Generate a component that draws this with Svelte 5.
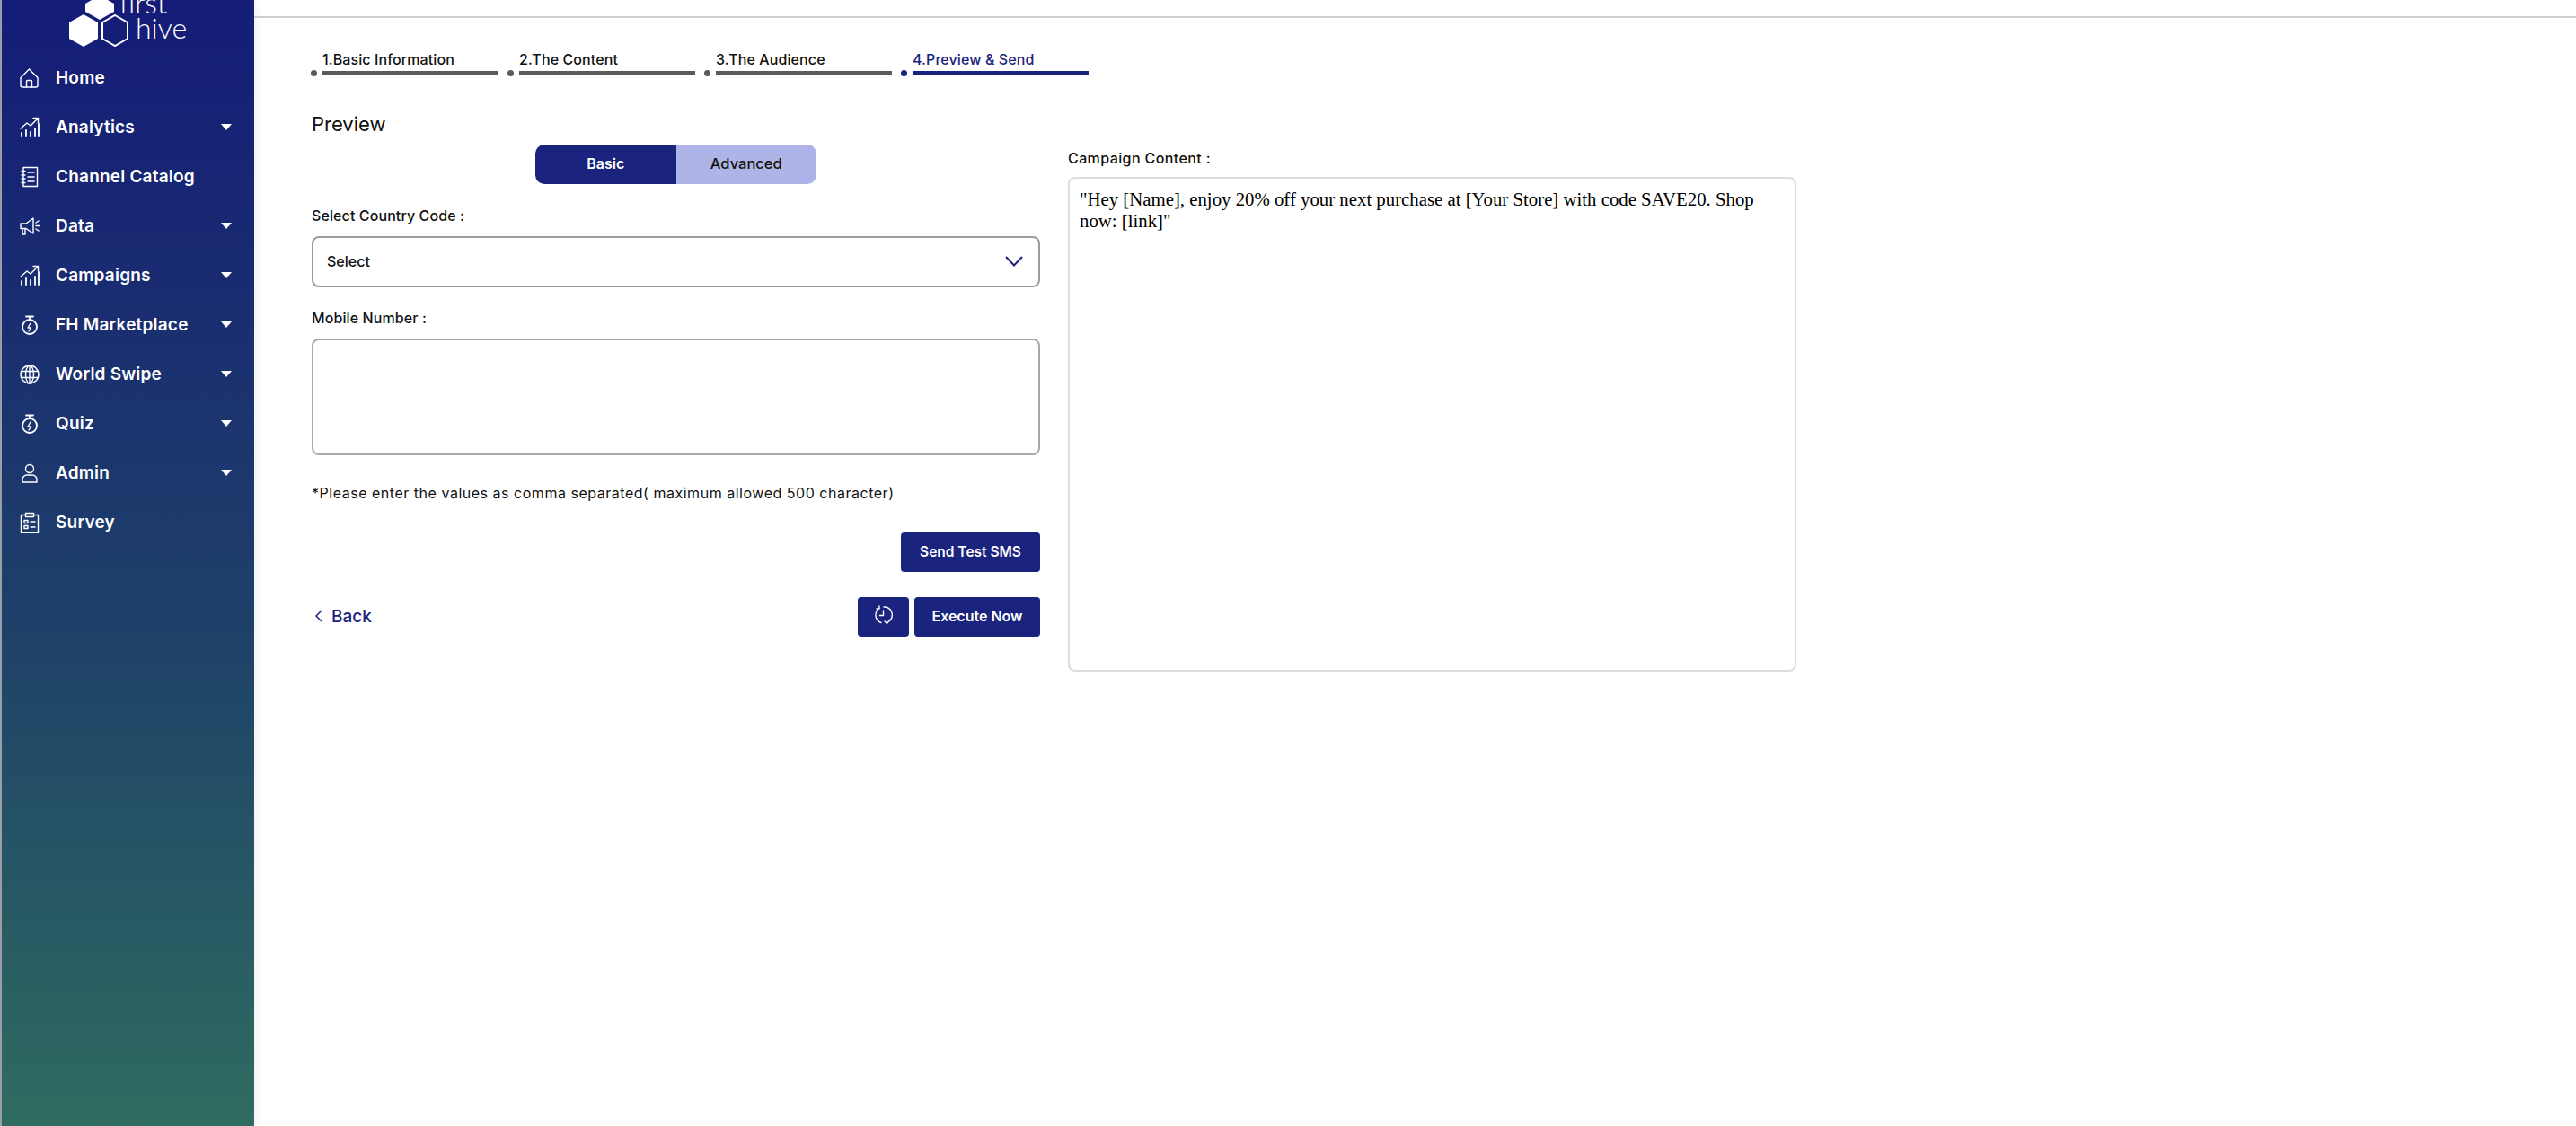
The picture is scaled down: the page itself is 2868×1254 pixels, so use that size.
<script>
  // Left nav entries: icon key, label, whether the row has a dropdown caret
  const nav = [
    { icon: "home", label: "Home" },
    { icon: "chart", label: "Analytics", caret: true },
    { icon: "book", label: "Channel Catalog" },
    { icon: "horn", label: "Data", caret: true },
    { icon: "chart", label: "Campaigns", caret: true },
    { icon: "watch", label: "FH Marketplace", caret: true },
    { icon: "globe", label: "World Swipe", caret: true },
    { icon: "watch", label: "Quiz", caret: true },
    { icon: "user", label: "Admin", caret: true },
    { icon: "clip", label: "Survey" },
  ];
  const steps = ["1.Basic Information", "2.The Content", "3.The Audience", "4.Preview & Send"];
  let mode = $state("Basic");
</script>

<div class="page">
  <aside class="sidebar">
    <svg class="logo" width="283" height="59" viewBox="0 0 283 59">
      <path d="M95 4 111 -5 127 4V13L111 22 95 13Z" fill="#fff" />
      <path d="M93 16 109 25V43L93 52 77 43V25Z" fill="#fff" />
      <path d="M128 17 142 25V43L128 51 114 43V25Z" fill="none" stroke="#fff" stroke-width="2" />
      <text x="133" y="15" class="logo-text">first</text>
      <text x="151" y="43" class="logo-text">hive</text>
    </svg>

    <nav>
      {#each nav as item (item.label)}
        <div class="nav-row">
          <svg class="nav-icon" width="24" height="24" viewBox="0 0 24 24" fill="none" stroke="#fff" stroke-width="1.4" stroke-linecap="round" stroke-linejoin="round">
            {#if item.icon === "home"}
              <path d="M2 11.5 11.5 2 21 11.5V20a2 2 0 0 1-2 2H4a2 2 0 0 1-2-2Z" />
              <path d="M8.5 22v-6.5a1 1 0 0 1 1-1h4a1 1 0 0 1 1 1V22" />
            {:else if item.icon === "chart"}
              <path d="M2 13 9 7l4 3 8-8M16 1.5h5.500V7" />
              <path d="M3 22v-4M8 22v-7M13 22v-5M18 22v-9M22 22V8" stroke-width="1.8" />
            {:else if item.icon === "book"}
              <path d="M5 1.5h15.500v21H5Z" />
              <path d="M3 5.5h4M3 10h4M3 14h4M3 18.5h4M10 7h7M10 12h7M10 17h7" />
            {:else if item.icon === "horn"}
              <path d="M2 9h6L16 3v17L8 14.5H2ZM4 14.5V21h3v-6.5" />
              <path d="M19 8l3-2M19 11.5h4M19 15l3 2" />
            {:else if item.icon === "watch"}
              <circle cx="12" cy="14" r="8" stroke-width="1.8" />
              <path d="M8 2.5h8M12 2.5V6" stroke-width="1.8" />
              <path d="M13 10l-3 5h3.500L11 19" />
            {:else if item.icon === "globe"}
              <circle cx="12" cy="12" r="10" />
              <ellipse cx="12" cy="12" rx="4.5" ry="10" />
              <path d="M2.5 8.5h19M2.5 15.5h19M12 2v20" />
            {:else if item.icon === "user"}
              <circle cx="12" cy="7" r="4.5" />
              <path d="M4 22v-3a5 5 0 0 1 5-5h6a5 5 0 0 1 5 5v3Z" />
            {:else}
              <path d="M7.5 3.5H2.5v20h19v-20h-5" />
              <path d="M7.5 1.5h9v4h-9Z" />
              <path d="M6 9.5h4v3H6ZM6 15.5h4v3H6ZM13 11h5M13 17h5" />
            {/if}
          </svg>
          <span class="nav-label">{item.label}</span>
          {#if item.caret}<span class="caret"></span>{/if}
        </div>
      {/each}
    </nav>
  </aside>

  <main class="main">
    <div class="topline"></div>

    <div class="stepper">
      {#each steps as step, i (step)}
        <div class="step" class:current={i === 3}>
          <span class="dot"></span>
          <div class="step-body">
            <span class="step-label">{step}</span>
            <span class="bar"></span>
          </div>
        </div>
      {/each}
    </div>

    <div class="columns">
      <section class="left">
        <h2>Preview</h2>
        <div class="toggle">
          {#each ["Basic", "Advanced"] as m (m)}
            <button class:on={mode === m} onclick={() => (mode = m)}>{m}</button>
          {/each}
        </div>

        <div class="field-label country">Select Country Code :</div>
        <div class="select">
          <span>Select</span>
          <svg width="20" height="12" viewBox="0 0 20 12" fill="none" stroke="#1a237e" stroke-width="2"><path d="M1 1l9 9.5L19 1" /></svg>
        </div>

        <div class="field-label mobile">Mobile Number :</div>
        <div class="mobile-box"></div>

        <p class="hint">*Please enter the values as comma separated( maximum allowed 500 character)</p>

        <div class="send-row"><button class="btn send">Send Test SMS</button></div>

        <div class="actions">
          <span class="back">
            <svg width="10" height="14" viewBox="0 0 10 14" fill="none" stroke="#1a237e" stroke-width="1.5"><path d="M8 1 2 7l6 6" /></svg>
            Back
          </span>
          <div class="action-btns">
            <button class="btn icon-btn" aria-label="Schedule">
              <svg width="22" height="22" viewBox="0 0 22 22" fill="none" stroke="#fff" stroke-width="1.4" stroke-linecap="round" stroke-linejoin="round">
                <path d="M6 3.5A9 9 0 0 0 8 19.5M6 1v3H3M11 2a9 9 0 0 1 6.5 15.5M10.5 6v5.500H6.5M12 18l2.5 2.5 3-4" />
              </svg>
            </button>
            <button class="btn exec">Execute Now</button>
          </div>
        </div>
      </section>

      <section class="right">
        <div class="field-label campaign">Campaign Content :</div>
        <div class="content-box">"Hey [Name], enjoy 20% off your next purchase at [Your Store] with code SAVE20. Shop now: [link]"</div>
      </section>
    </div>
  </main>
</div>

<style>
  :global(body) {
    margin: 0;
    background: #fff;
  }
  .page {
    display: flex;
    width: 2868px;
    height: 1254px;
    overflow: hidden;
    font-family: "Inter", "Noto Sans", sans-serif;
    color: #111;
  }

  .sidebar {
    flex: none;
    width: 281px;
    height: 1254px;
    border-left: 2px solid #9a9ea8;
    background: linear-gradient(180deg, #141c78 0%, #1a2f70 30%, #1e4069 55%, #2f6c60 100%);
    box-shadow: 3px 0 8px rgba(0, 0, 0, 0.06);
  }
  .logo {
    display: block;
    margin-left: -2px;
  }
  .logo-text {
    font-family: "Lato", sans-serif;
    font-weight: 300;
    font-size: 32px;
    fill: #fff;
  }
  nav {
    display: flex;
    flex-direction: column;
  }
  .nav-row {
    height: 55px;
    display: flex;
    align-items: center;
    color: #fff;
    padding-left: 19px;
  }
  .nav-icon {
    flex: none;
    margin-right: 17px;
  }
  .nav-label {
    font-size: 19px;
    font-weight: 600;
    letter-spacing: 0.2px;
    white-space: nowrap;
  }
  .caret {
    margin-left: auto;
    margin-right: 25px;
    width: 0;
    height: 0;
    border-left: 6px solid transparent;
    border-right: 6px solid transparent;
    border-top: 7px solid #fff;
  }

  .main {
    flex: 1;
    min-width: 0;
  }
  .topline {
    height: 20px;
    border-bottom: 2px solid #cfcfcf;
    box-sizing: border-box;
  }

  .stepper {
    display: flex;
    margin: 36px 0 0 63px;
  }
  .step {
    display: flex;
    align-items: flex-end;
    gap: 6px;
    width: 219px;
    color: #111;
  }
  .step.current {
    color: #1a237e;
  }
  .dot {
    flex: none;
    width: 7px;
    height: 7px;
    border-radius: 50%;
    margin-bottom: -1px;
    background: #5a5a5a;
  }
  .current .dot,
  .current .bar {
    background: #1a237e;
  }
  .step-body {
    width: 196px;
    display: flex;
    flex-direction: column;
    gap: 3px;
  }
  .step-label {
    font-size: 16px;
    font-weight: 500;
    letter-spacing: 0.1px;
    line-height: 20px;
    white-space: nowrap;
  }
  .bar {
    display: block;
    height: 5px;
    background: #5a5a5a;
  }

  .columns {
    display: grid;
    grid-template-columns: 811px 811px;
    gap: 31px;
    margin: 39px 0 0 64px;
  }
  .left,
  .right {
    display: flex;
    flex-direction: column;
  }
  h2 {
    margin: 0;
    font-size: 22px;
    font-weight: 400;
    line-height: 30px;
  }
  .toggle {
    display: flex;
    align-self: center;
    margin-top: 8px;
    height: 44px;
    border-radius: 10px;
    overflow: hidden;
  }
  .toggle button {
    width: 156.5px;
    border: none;
    background: #aeb4e8;
    color: #111;
    font-family: inherit;
    font-size: 16.5px;
    font-weight: 500;
    padding: 0 0 2px;
  }
  .toggle button.on {
    background: #1a237e;
    color: #fff;
    font-weight: 600;
    font-size: 16px;
  }
  .field-label {
    font-size: 16px;
    font-weight: 500;
    letter-spacing: 0.1px;
    line-height: 20px;
  }
  .campaign {
    letter-spacing: 0.4px;
  }
  .country {
    margin-top: 25px;
  }
  .mobile {
    margin-top: 24px;
  }
  .select {
    margin-top: 13px;
    height: 57px;
    box-sizing: border-box;
    border: 2px solid #9b9b9b;
    border-radius: 8px;
    padding: 0 17px 2px 15px;
    display: flex;
    align-items: center;
    justify-content: space-between;
    font-size: 16px;
    font-weight: 500;
  }
  .mobile-box {
    margin-top: 13px;
    height: 130px;
    box-sizing: border-box;
    border: 2px solid #a8a8a8;
    border-radius: 8px;
  }
  .hint {
    margin: 32px 0 0;
    font-size: 16px;
    font-weight: 400;
    letter-spacing: 0.52px;
    line-height: 20px;
    white-space: nowrap;
  }
  .send-row {
    margin-top: 34px;
    display: flex;
    justify-content: flex-end;
  }
  .btn {
    height: 44px;
    border: none;
    border-radius: 4px;
    background: #1a237e;
    color: #fff;
    font-family: inherit;
    font-size: 16px;
    font-weight: 600;
    padding: 0 0 2px;
  }
  .send {
    width: 155px;
    font-size: 15.5px;
  }
  .actions {
    margin-top: 28px;
    display: flex;
    align-items: center;
    justify-content: space-between;
  }
  .back {
    display: inline-flex;
    align-items: center;
    gap: 9px;
    padding: 0 0 2px 3px;
    color: #1a237e;
    font-size: 19px;
    font-weight: 500;
  }
  .action-btns {
    display: flex;
    gap: 6px;
  }
  .icon-btn {
    width: 57px;
    display: flex;
    align-items: center;
    justify-content: center;
    padding-bottom: 4px;
  }
  .exec {
    width: 140px;
  }

  .right {
    padding-top: 43px;
  }
  .content-box {
    margin-top: 11px;
    height: 551px;
    box-sizing: border-box;
    border: 2px solid #dcdcdc;
    border-radius: 8px;
    padding: 11px 11px;
    font-family: "Liberation Serif", serif;
    font-size: 20.8px;
    line-height: 24px;
    color: #000;
  }
</style>
